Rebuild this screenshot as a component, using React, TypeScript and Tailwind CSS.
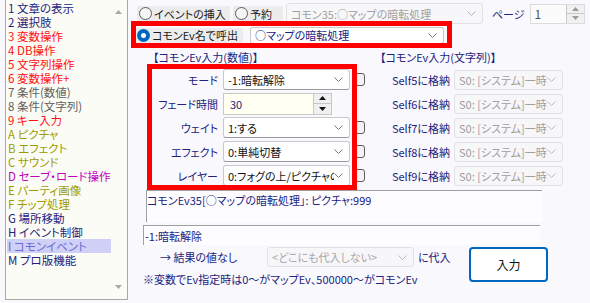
import React from 'react';

const NAVY = 'text-[#22227e]';

const items: [string, string, string][] = [
  ['1', '文章の表示', 'text-[#22227e]'],
  ['2', '選択肢', 'text-[#22227e]'],
  ['3', '変数操作', 'text-[#ff1010]'],
  ['4', 'DB操作', 'text-[#ff1010]'],
  ['5', '文字列操作', 'text-[#ff1010]'],
  ['6', '変数操作+', 'text-[#ff1010]'],
  ['7', '条件(数値)', 'text-[#606060]'],
  ['8', '条件(文字列)', 'text-[#606060]'],
  ['9', 'キー入力', 'text-[#ff1010]'],
  ['A', 'ピクチャ', 'text-[#9c9c00]'],
  ['B', 'エフェクト', 'text-[#9c9c00]'],
  ['C', 'サウンド', 'text-[#9c9c00]'],
  ['D', 'セーブ・ロード操作', 'text-[#c000c0]'],
  ['E', 'パーティ画像', 'text-[#9c9c00]'],
  ['F', 'チップ処理', 'text-[#9c9c00]'],
  ['G', '場所移動', 'text-[#22227e]'],
  ['H', 'イベント制御', 'text-[#22227e]'],
  ['I', 'コモンイベント', 'text-[#6a6ad8] bg-[#d0d0f6]'],
  ['M', 'プロ版機能', 'text-[#22227e]'],
];

function Chevron({ color = '#7a7a7a' }: { color?: string }) {
  return (
    <svg width="9" height="5" viewBox="0 0 9 5" className="shrink-0">
      <path d="M0.5 0.5 L4.5 4.5 L8.5 0.5" fill="none" stroke={color} strokeWidth="1" />
    </svg>
  );
}

function Combo({ className, text, textClass, disabled }: { className: string; text: string; textClass: string; disabled?: boolean }) {
  return (
    <div
      className={
        'flex items-center rounded-[3px] border pl-[4px] pr-[6px] ' +
        (disabled ? 'border-[#e2e2e2] bg-[#f7f7f9] ' : 'border-[#c8c8c8] border-b-[#9a9a9a] bg-white ') +
        className
      }
    >
      <span className={'flex-1 overflow-hidden whitespace-nowrap ' + textClass}>{text}</span>
      <Chevron color={disabled ? '#b8b8b8' : '#7a7a7a'} />
    </div>
  );
}

function Radio({ label, checked, className }: { label: string; checked?: boolean; className: string }) {
  return (
    <div className={'flex h-[15px] items-center gap-[2px] bg-[#ececec] pl-[2px] text-[#1a1a1a] ' + className}>
      {checked ? (
        <span className="flex h-[13px] w-[13px] items-center justify-center rounded-full bg-[#0067c0]">
          <span className="h-[5px] w-[5px] rounded-full bg-white" />
        </span>
      ) : (
        <span className="h-[13px] w-[13px] rounded-full border border-[#5c5c5c] bg-[#f6f6f6]" />
      )}
      <span className="whitespace-nowrap">{label}</span>
    </div>
  );
}

function Arrows({ dark }: { dark?: boolean }) {
  const c = dark ? '#111' : '#9a9a9a';
  return (
    <div className="flex h-full w-[18px] flex-col border-l border-[#c8c8c8]">
      <div className="flex flex-1 items-center justify-center border-b border-[#c8c8c8] bg-[#f0f0f0]">
        <svg width="7" height="4" viewBox="0 0 7 4"><path d="M0 4 L3.5 0 L7 4 Z" fill={c} /></svg>
      </div>
      <div className="flex flex-1 items-center justify-center bg-[#f0f0f0]">
        <svg width="7" height="4" viewBox="0 0 7 4"><path d="M0 0 L3.5 4 L7 0 Z" fill={c} /></svg>
      </div>
    </div>
  );
}

function Check() {
  return <span className="ml-[2px] h-[13px] w-[13px] shrink-0 rounded-[3px] border border-[#5e5e5e] bg-[#f3f3f3]" />;
}

function ParamRow({ label, self, children }: { label: string; self: string; children: React.ReactNode }) {
  return (
    <div className="flex h-[21px] items-center">
      <span className={'w-[70px] whitespace-nowrap text-right ' + NAVY}>{label}</span>
      <div className="ml-[5px] flex h-full w-[142px] items-center">{children}</div>
      <span className={'w-[85px] whitespace-nowrap text-right ' + NAVY}>{self}</span>
      <Combo className="ml-[4px] h-[20px] w-[109px]" text="S0: [システム]一時:" textClass="text-[#a0a0a0]" disabled />
    </div>
  );
}

export default function App() {
  return (
    <div className="relative flex h-[303px] w-[590px] overflow-hidden bg-[#f9f9fd] font-['Noto_Sans_CJK_JP',sans-serif] text-[11px] leading-[14px] [font-feature-settings:'palt']">
      {/* command list */}
      <div className="ml-[5px] flex h-[300px] w-[123px] shrink-0 border-x border-b border-[#a8a8a8] bg-[#fcfcf6] text-[11.5px]">
        <div className="flex-1 pl-[1px] pt-[1px]">
          {items.map(([k, t, c]) => (
            <div key={k} className={'h-[14px] whitespace-nowrap pl-[1px] ' + c}>
              {k} {t}
            </div>
          ))}
        </div>
        <div className="flex w-[16px] flex-col items-center justify-between py-[10px] pr-[2px]">
          <svg width="7" height="4" viewBox="0 0 7 4"><path d="M0 4 L3.5 0 L7 4 Z" fill="#a8a8a8" /></svg>
          <svg width="7" height="4" viewBox="0 0 7 4"><path d="M0 0 L3.5 4 L7 0 Z" fill="#a8a8a8" /></svg>
        </div>
      </div>

      {/* editor panel */}
      <div className="flex flex-1 flex-col">
        <div className="mt-[3px] flex h-[21px] items-center">
          <Radio label="イベントの挿入" className="ml-[9px] w-[93px]" />
          <Radio label="予約" className="ml-[3px] w-[50px]" />
          <Combo className="ml-[3px] h-[21px] w-[197px]" text="コモン35:○マップの暗転処理" textClass="text-[#a0a0a0]" disabled />
          <span className={'ml-[9px] ' + NAVY}>ページ</span>
          <div className="ml-[5px] flex h-[20px] w-[55px] items-center border border-[#dcdcdc] bg-[#fbfbfb]">
            <span className="flex-1 pl-[4px] text-[12px] text-[#555]">1</span>
            <Arrows />
          </div>
        </div>

        <div className="mt-[1px] flex h-[20px] items-center">
          <Radio label="コモンEv名で呼出" checked className="ml-[7px] w-[108px]" />
          <Combo className="ml-[7px] h-[17px] w-[194px]" text="○マップの暗転処理" textClass={NAVY} />
        </div>

        <div className="mt-[5px] flex h-[14px]">
          <span className={'ml-[25px] w-[97px] whitespace-nowrap ' + NAVY}>【コモンEv入力(数値)】</span>
          <span className={'ml-[130px] whitespace-nowrap ' + NAVY}>【コモンEv入力(文字列)】</span>
        </div>

        <div className="ml-[20px] mt-[5px] flex flex-col gap-[3px]">
          <ParamRow label="モード" self="Self5に格納">
            <Combo className="h-[21px] w-[127px]" text="-1:暗転解除" textClass="text-[#111]" />
            <Check />
          </ParamRow>
          <ParamRow label="フェード時間" self="Self6に格納">
            <div className="flex h-[22px] w-[109px] items-center border border-[#c8c8c8] bg-[#fffff2]">
              <span className={'flex-1 pl-[6px] ' + NAVY}>30</span>
              <Arrows dark />
            </div>
          </ParamRow>
          <ParamRow label="ウェイト" self="Self7に格納">
            <Combo className="h-[21px] w-[127px]" text="1:する" textClass="text-[#111]" />
            <Check />
          </ParamRow>
          <ParamRow label="エフェクト" self="Self8に格納">
            <Combo className="h-[21px] w-[127px]" text="0:単純切替" textClass="text-[#111]" />
            <Check />
          </ParamRow>
          <ParamRow label="レイヤー" self="Self9に格納">
            <Combo className="h-[21px] w-[127px]" text="0:フォグの上/ピクチャの下" textClass="text-[#111]" />
            <Check />
          </ParamRow>
        </div>

        <div className={'ml-[18px] mt-[4px] h-[32px] w-[396px] border-l border-t border-[#a0a0a0] bg-[#fdfdff] pt-[2px] whitespace-nowrap ' + NAVY}>
          コモンEv35[○マップの暗転処理」: ピクチャ:999
        </div>
        <div className={'ml-[15px] mt-[3px] h-[20px] w-[397px] border-l border-t border-[#a0a0a0] bg-[#fdfdff] pt-[3px] pl-[1px] whitespace-nowrap ' + NAVY}>
          -1:暗転解除
        </div>

        <div className="ml-[15px] mt-[2px] flex items-start">
          <div className="flex w-[309px] flex-col">
            <div className="flex h-[20px] items-center">
              <span className={'w-[124px] whitespace-nowrap pl-[17px] ' + NAVY}>→ 結果の値なし</span>
              <Combo className="h-[20px] w-[147px]" text="<どこにも代入しない>" textClass="text-[#a8a8a8]" disabled />
              <span className={'ml-[4px] whitespace-nowrap ' + NAVY}>に代入</span>
            </div>
            <div className={'mt-[5px] whitespace-nowrap ' + NAVY}>※変数でEv指定時は0～がマップEv、500000～がコモンEv</div>
          </div>
          <button className="ml-[17px] flex h-[35px] w-[79px] items-center justify-center rounded-[4px] border-2 border-[#0067c0] bg-white text-[12px] text-[#111]">
            入力
          </button>
        </div>
      </div>

      {/* annotation outlines */}
      <div className="absolute left-[131px] top-[21px] h-[27px] w-[321px] border-[5px] border-[#ff0000]" />
      <div className="absolute left-[147px] top-[64px] h-[126px] w-[210px] border-[5px] border-[#ff0000]" />
    </div>
  );
}
